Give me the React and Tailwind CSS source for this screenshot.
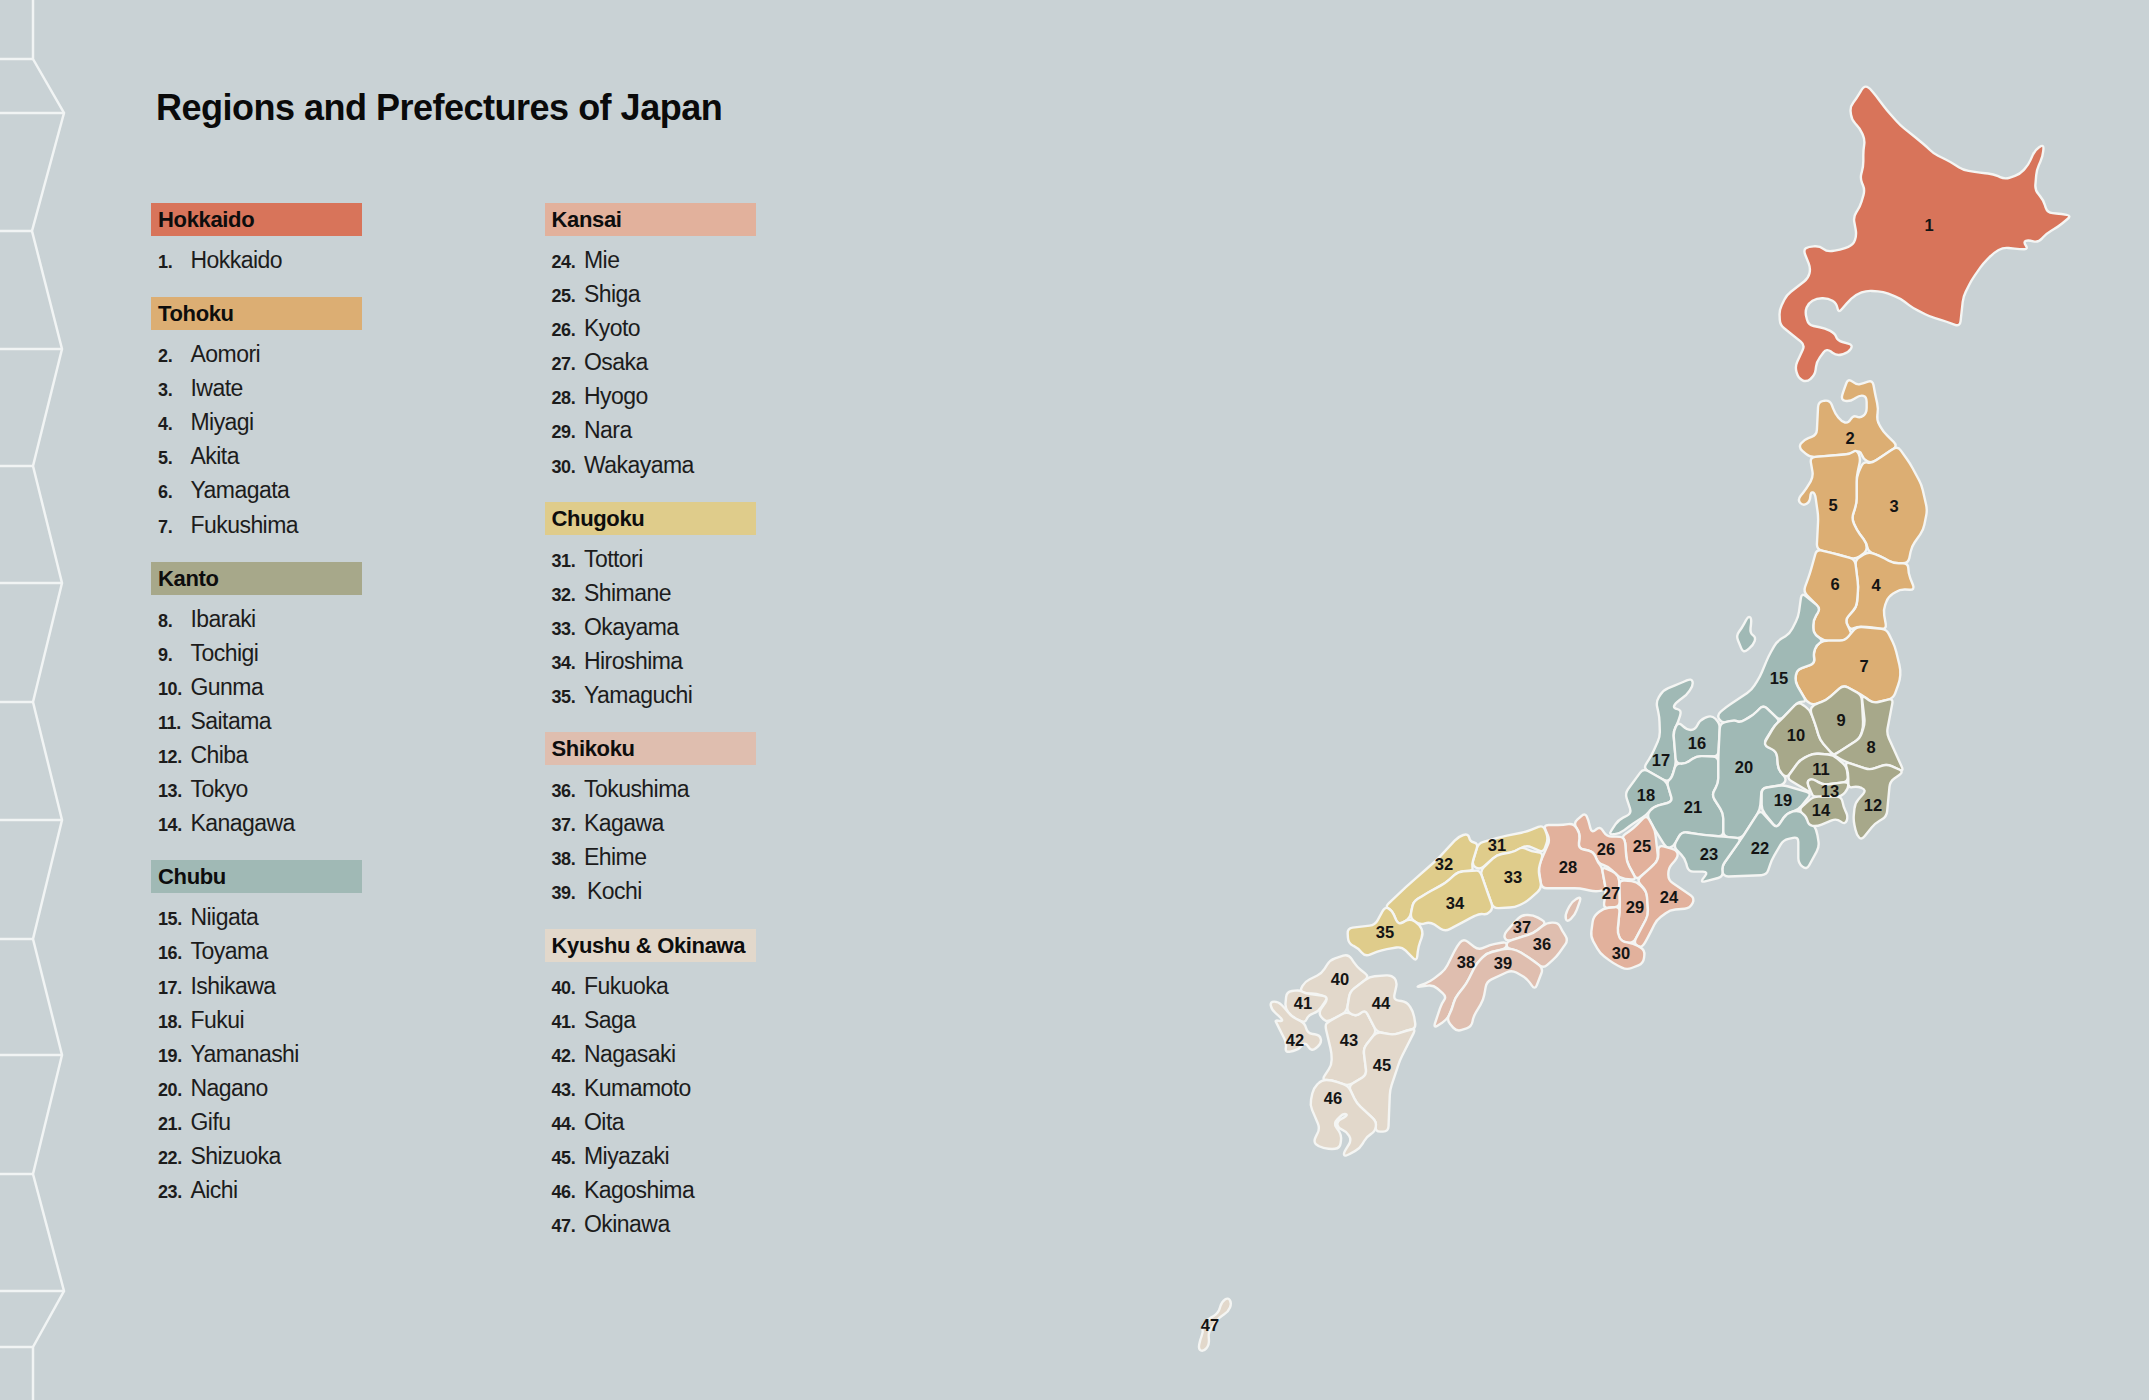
const LEFT_COLUMN = [
  { name: "Hokkaido", color: "bg-[#d8745a]", first: 1, items: ["Hokkaido"] },
  { name: "Tohoku", color: "bg-[#dcae73]", first: 2, items: ["Aomori", "Iwate", "Miyagi", "Akita", "Yamagata", "Fukushima"] },
  { name: "Kanto", color: "bg-[#a7a88a]", first: 8, items: ["Ibaraki", "Tochigi", "Gunma", "Saitama", "Chiba", "Tokyo", "Kanagawa"] },
  { name: "Chubu", color: "bg-[#a0b9b5]", first: 15, items: ["Niigata", "Toyama", "Ishikawa", "Fukui", "Yamanashi", "Nagano", "Gifu", "Shizuoka", "Aichi"] },
];

const RIGHT_COLUMN = [
  { name: "Kansai", color: "bg-[#e2b19c]", first: 24, items: ["Mie", "Shiga", "Kyoto", "Osaka", "Hyogo", "Nara", "Wakayama"] },
  { name: "Chugoku", color: "bg-[#dfcc8b]", first: 31, items: ["Tottori", "Shimane", "Okayama", "Hiroshima", "Yamaguchi"] },
  { name: "Shikoku", color: "bg-[#dfbeaf]", first: 36, items: ["Tokushima", "Kagawa", "Ehime", "Kochi"] },
  { name: "Kyushu & Okinawa", color: "bg-[#e2d8cb]", first: 40, items: ["Fukuoka", "Saga", "Nagasaki", "Kumamoto", "Oita", "Miyazaki", "Kagoshima", "Okinawa"] },
];

// outlines are traced at 3x, each group is moved to its place on the page
const MAP_GROUPS = [
  {
    at: [1700, 50],
    shapes: [
      ["#d8745a", "490,110 505,110 530,140 560,180 600,225 650,265 680,290 700,310 750,335 790,360 840,368 880,372 915,388 960,372 985,345 1005,300 1032,282 1028,320 1010,360 1005,420 1030,450 1042,488 1085,492 1115,497 1075,530 1040,550 1015,578 985,570 970,575 985,598 960,598 910,592 880,610 850,640 815,690 790,740 780,830 740,815 690,800 640,775 600,745 550,725 500,722 465,735 440,760 415,790 410,760 385,745 350,745 325,760 315,785 325,825 375,835 405,850 412,872 460,885 445,908 410,918 380,895 350,935 345,975 320,997 295,985 285,950 315,885 290,865 240,825 238,780 260,735 325,685 332,655 310,600 325,590 360,588 380,605 420,600 460,585 470,555 460,500 480,470 495,420 480,385 490,350 490,300 495,270 480,235 455,210 450,170 470,145"],
    ],
  },
  {
    at: [1600, 370],
    shapes: [
      ["#dcae73", "745,25 770,45 790,40 818,30 825,70 835,115 830,150 850,185 893,228 860,250 815,280 790,268 780,240 750,252 630,262 595,232 610,210 650,195 655,95 690,90 705,130 725,155 745,160 760,135 780,145 800,130 800,80 780,75 750,95 722,90 735,50"],
      ["#dcae73", "893,228 930,280 965,345 982,420 970,480 935,530 925,580 880,580 840,558 805,545 800,520 770,480 755,445 770,400 770,320 790,275 815,280 860,250"],
      ["#dcae73", "630,262 750,252 770,238 782,265 770,320 770,400 755,445 770,480 800,520 800,545 765,568 700,550 650,538 655,440 645,370 632,365 630,395 610,408 592,390 620,355 640,320"],
      ["#dcae73", "805,545 840,558 880,580 925,580 925,610 945,660 900,658 865,680 850,720 860,778 800,770 770,770 750,780 735,750 770,710 775,650 765,570"],
      ["#dcae73", "650,538 700,550 765,568 775,650 770,710 735,750 750,780 755,795 735,812 670,812 640,790 640,750 660,715 610,665 630,610"],
      ["#dcae73", "670,812 735,812 770,770 860,778 885,830 902,900 900,930 880,985 820,1000 785,975 730,945 680,990 640,1005 620,995 585,935 590,900 645,880 640,850 650,825"],
      ["#a0b9b5", "445,738 455,745 450,790 468,802 460,825 430,850 408,797 425,775"],
    ],
  },
  {
    at: [1580, 660],
    shapes: [
      ["#a0b9b5", "665,-202 722,-155 700,-120 700,-80 730,-58 710,-45 700,-20 705,10 650,30 645,65 680,125 655,125 600,182 550,135 520,165 480,188 465,180 425,190 410,165 440,140 515,90 540,50 565,-10 590,-55 630,-80 655,-130"],
      ["#a0b9b5", "335,55 340,75 320,105 285,130 280,145 305,150 295,185 280,215 288,310 275,355 260,365 190,325 215,285 240,230 238,170 228,125 250,90 300,70"],
      ["#a0b9b5", "295,185 320,210 345,210 360,180 395,165 420,190 415,290 350,288 315,312 288,310 280,215"],
      ["#a0b9b5", "190,325 260,365 278,425 220,440 200,465 160,490 120,520 85,525 115,480 155,460 135,400"],
      ["#a0b9b5", "288,310 315,312 350,288 415,290 415,370 395,405 430,460 430,530 370,525 305,515 280,560 260,565 225,510 200,465 220,440 278,425 260,365 275,355"],
      ["#a0b9b5", "420,190 465,180 480,188 520,165 550,135 600,182 585,195 550,250 590,275 595,330 620,355 610,375 545,385 540,450 485,535 430,530 430,460 395,405 415,370 415,290"],
      ["#a0b9b5", "610,375 695,400 655,450 620,460 590,505 545,450 545,385"],
      ["#a0b9b5", "540,450 590,505 620,460 655,450 685,470 710,510 718,560 680,630 655,610 655,530 610,540 575,600 560,645 430,650 425,620 485,535"],
      ["#a0b9b5", "305,515 370,525 430,530 485,535 425,620 430,650 360,668 385,635 325,635 315,595 280,560"],
      ["#a7a88a", "655,125 690,150 705,190 720,240 760,285 700,280 660,300 620,355 595,330 590,275 550,255 585,195 600,182"],
      ["#a7a88a", "700,135 740,120 790,75 845,105 850,200 840,235 770,280 760,285 720,240 705,190 690,150"],
      ["#a7a88a", "845,105 880,130 940,115 920,220 972,335 920,312 870,330 795,305 760,285 770,280 840,235 855,190"],
      ["#a7a88a", "760,285 700,280 660,300 620,355 695,400 680,365 695,355 730,375 805,365 800,320"],
      ["#a7a88a", "680,365 695,355 730,375 805,365 805,385 785,410 700,410 695,400"],
      ["#a7a88a", "700,410 785,410 790,440 805,470 795,495 770,475 710,500 685,495 680,470 655,450"],
      ["#a7a88a", "795,305 870,330 920,312 972,335 930,365 920,470 885,490 845,540 830,525 820,480 825,430 860,390 830,378 805,385 805,340"],
    ],
  },
  {
    at: [1520, 800],
    shapes: [
      ["#e2b19c", "380,45 405,90 415,180 390,205 350,240 320,185 315,120 305,110 340,85"],
      ["#e2b19c", "160,70 195,38 205,60 215,100 240,78 260,110 305,110 315,120 320,185 350,240 300,235 265,200 235,190 220,155 175,145 180,100"],
      ["#e2b19c", "70,75 130,75 160,70 180,100 175,145 220,155 235,190 245,200 258,270 225,275 180,265 110,265 65,265 55,200 90,120"],
      ["#e2b19c", "245,200 290,220 298,240 300,320 250,325 258,270"],
      ["#e2b19c", "298,240 350,245 380,275 385,345 340,430 305,425 292,400 300,320"],
      ["#e2b19c", "350,240 390,205 415,180 415,135 470,150 475,170 445,205 445,240 525,295 510,325 450,330 410,360 385,410 365,445 340,430 385,345 380,275"],
      ["#e2b19c", "250,325 300,320 292,400 305,425 340,430 375,450 370,490 320,510 280,490 240,460 212,410 220,350"],
      ["#dfbeaf", "185,288 165,345 140,368 135,345 155,305"],
    ],
  },
  {
    at: [1330, 800],
    shapes: [
      ["#dfcc8b", "640,75 655,115 640,158 590,135 555,155 500,165 450,210 425,195 445,130 515,110 590,95"],
      ["#dfcc8b", "640,158 625,210 635,265 590,305 555,322 490,325 470,270 450,212 500,165 555,155 575,140 605,155"],
      ["#dfcc8b", "415,100 420,125 445,130 425,195 430,212 385,215 345,250 290,280 250,305 240,355 205,375 185,330 165,320 240,250 320,180 385,110"],
      ["#dfcc8b", "430,212 450,212 470,270 490,325 470,345 450,340 420,355 345,395 300,365 270,375 240,355 250,305 290,280 345,250 385,215"],
      ["#dfcc8b", "165,320 185,330 205,375 240,355 270,375 280,400 265,440 260,485 215,440 155,450 105,470 85,445 55,430 52,385 135,375"],
      ["#dfbeaf", "610,345 650,368 610,400 530,425 520,405 555,365 575,345"],
      ["#dfbeaf", "650,368 685,368 695,390 715,420 680,470 640,505 600,475 560,450 530,445 530,425 610,400"],
      ["#dfbeaf", "400,415 445,450 480,435 530,425 530,445 470,460 440,490 410,550 375,595 365,630 350,660 310,685 335,610 350,590 310,555 255,562 300,545 345,510 380,440"],
      ["#dfbeaf", "530,445 560,450 600,475 640,505 615,570 590,535 545,510 470,545 460,600 430,650 425,680 380,695 350,660 365,630 375,595 410,550 440,490 470,460"],
    ],
  },
  {
    at: [1250, 940],
    shapes: [
      ["#e2d8cb", "295,42 320,80 358,110 300,155 290,215 235,245 220,240 205,218 235,175 200,160 160,160 150,150 165,125 215,100 240,60"],
      ["#e2d8cb", "110,155 150,150 165,160 235,170 205,215 175,225 165,250 125,230 105,205"],
      ["#e2d8cb", "60,185 85,185 105,205 125,230 165,250 172,280 210,285 215,310 185,335 165,305 145,330 105,338 110,310 80,250 75,240 100,245 90,230 65,210"],
      ["#e2d8cb", "235,245 290,215 320,230 345,208 380,275 340,325 350,405 295,438 245,420 215,420 245,375 245,340 225,255"],
      ["#e2d8cb", "300,155 358,110 425,105 442,125 430,180 470,185 490,215 498,265 470,272 430,285 380,275 345,208 320,230 290,215"],
      ["#e2d8cb", "380,275 430,285 470,272 498,265 450,360 420,450 415,575 375,575 380,545 320,490 295,438 350,405 340,325"],
      ["#e2d8cb", "215,420 245,420 295,438 320,490 380,545 375,575 350,590 330,625 285,650 280,640 305,600 290,575 265,565 260,545 295,525 280,520 250,550 275,585 270,625 240,628 205,620 190,605 210,565 180,495 190,445"],
    ],
  },
  {
    at: [1170, 1280],
    shapes: [
      ["#e2d8cb", "155,65 175,52 185,70 175,95 145,115 135,130 115,155 118,195 100,215 85,208 90,180 100,155 95,140 110,120 145,100"],
    ],
  },
];

const MAP_LABELS = [
  [1, 1929, 225], [2, 1850, 438], [3, 1894, 506], [4, 1876, 585], [5, 1833, 505], [6, 1835, 584], [7, 1864, 666],
  [8, 1871, 747], [9, 1841, 720], [10, 1796, 735], [11, 1821, 769], [12, 1873, 805], [13, 1830, 791], [14, 1821, 810],
  [15, 1779, 678], [16, 1697, 743], [17, 1661, 760], [18, 1646, 795], [19, 1783, 800], [20, 1744, 767], [21, 1693, 807],
  [22, 1760, 848], [23, 1709, 854], [24, 1669, 897], [25, 1642, 846], [26, 1606, 849], [27, 1611, 893], [28, 1568, 867],
  [29, 1635, 907], [30, 1621, 953], [31, 1497, 845], [32, 1444, 864], [33, 1513, 877], [34, 1455, 903], [35, 1385, 932],
  [36, 1542, 944], [37, 1522, 927], [38, 1466, 962], [39, 1503, 963], [40, 1340, 979], [41, 1303, 1003], [42, 1295, 1040],
  [43, 1349, 1040], [44, 1381, 1003], [45, 1382, 1065], [46, 1333, 1098], [47, 1210, 1325],
];

const EDGE_POINTS = "33,0 33,59 64,113 32,231 62,349 33,466 62,583 33,702 62,820 33,939 62,1055 33,1174 64,1291 33,1347 33,1400";
const EDGE_RULES = [[59, 33], [113, 64], [231, 32], [349, 62], [466, 33], [583, 62], [702, 33], [820, 62], [939, 33], [1055, 62], [1174, 33], [1291, 64], [1347, 33]];

// rounds each corner of a traced outline, so the coast doesn't look faceted
function roundedPath(points, radius = 16) {
  const pts = points.split(" ").map((p) => p.split(",").map(Number));
  const towards = (from, to) => {
    const dx = to[0] - from[0];
    const dy = to[1] - from[1];
    const len = Math.hypot(dx, dy);
    const step = Math.min(radius, len / 2) / len;
    return [from[0] + dx * step, from[1] + dy * step];
  };
  let d = "";
  pts.forEach((p, i) => {
    const prev = pts[(i + pts.length - 1) % pts.length];
    const next = pts[(i + 1) % pts.length];
    const a = towards(p, prev);
    const b = towards(p, next);
    d += `${i === 0 ? "M" : "L"}${a[0]} ${a[1]} Q${p[0]} ${p[1]} ${b[0]} ${b[1]} `;
  });
  return d + "Z";
}

function EdgeLines() {
  return (
    <svg className="absolute left-0 top-0" width="70" height="1400" viewBox="0 0 70 1400" fill="none" stroke="#f1f4f4" strokeWidth="2.5">
      <polyline points={EDGE_POINTS} />
      {EDGE_RULES.map(([y, x]) => (
        <line key={y} x1="0" y1={y} x2={x} y2={y} />
      ))}
    </svg>
  );
}

function JapanMap() {
  return (
    <svg className="absolute left-0 top-0" width="2149" height="1400" viewBox="0 0 2149 1400">
      {MAP_GROUPS.map((group) => (
        <g key={group.at.join()} transform={`translate(${group.at[0]} ${group.at[1]}) scale(0.3333)`}>
          {group.shapes.map(([fill, points]) => (
            <path
              key={points}
              d={roundedPath(points)}
              fill={fill}
              stroke="#f4f5f3"
              strokeWidth="2.4"
              strokeLinejoin="round"
              vectorEffect="non-scaling-stroke"
            />
          ))}
        </g>
      ))}
      {MAP_LABELS.map(([num, x, y]) => (
        <text key={num} x={x} y={y} textAnchor="middle" dominantBaseline="central" fill="#141414" className="text-[16.5px] font-bold">
          {num}
        </text>
      ))}
    </svg>
  );
}

function Region({ region }) {
  return (
    <section>
      <h2 className={`${region.color} h-[33px] pl-[7px] text-[22px] leading-[33px] font-bold tracking-[-0.35px] text-[#0d0d0d]`}>
        {region.name}
      </h2>
      <ol className="mt-[7px]">
        {region.items.map((item, i) => (
          <li key={item} className="flex h-[34.1px] items-baseline pl-[7px] leading-[34px] text-[#1c1c1c]">
            <span className="w-[32.5px] shrink-0 text-[18px] font-bold tracking-[-0.4px]">{region.first + i}.</span>
            <span className={item === "Kochi" ? "pl-[3px] text-[23px] tracking-[-0.55px]" : "text-[23px] tracking-[-0.55px]"}>{item}</span>
          </li>
        ))}
      </ol>
    </section>
  );
}

export default function App() {
  return (
    <div className="relative h-[1400px] w-[2149px] overflow-hidden bg-[#c9d2d5] font-['Liberation_Sans',Arial,sans-serif]">
      <EdgeLines />
      <JapanMap />
      <main className="relative pl-[151px] pt-[86px]">
        <h1 className="ml-[5px] text-[36px] leading-[44px] font-bold tracking-[-0.5px] text-[#0a0a0a]">
          Regions and Prefectures of Japan
        </h1>
        <div className="mt-[73px] flex gap-[182.5px]">
          <div className="flex w-[211px] flex-col gap-[20px]">
            {LEFT_COLUMN.map((region) => (
              <Region key={region.name} region={region} />
            ))}
          </div>
          <div className="flex w-[211px] flex-col gap-[20px]">
            {RIGHT_COLUMN.map((region) => (
              <Region key={region.name} region={region} />
            ))}
          </div>
        </div>
      </main>
    </div>
  );
}
